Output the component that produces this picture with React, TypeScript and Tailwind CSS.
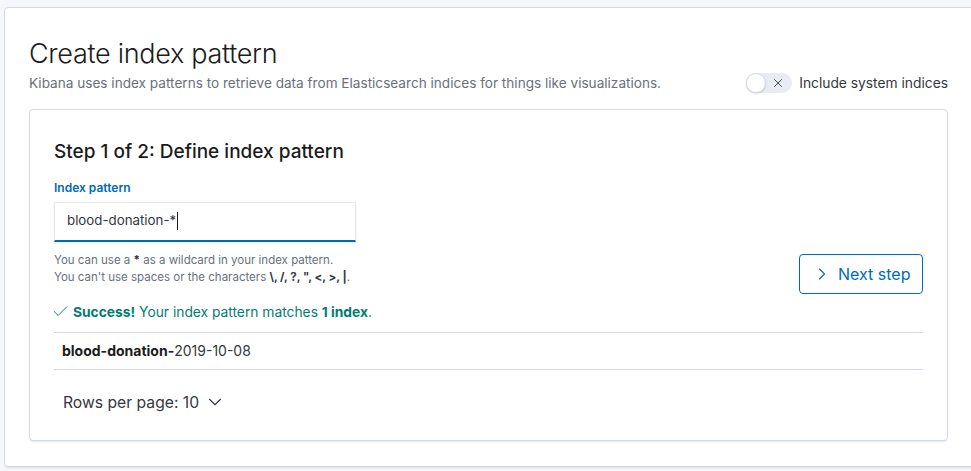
import { ChevronRight, ChevronDown, Check, X } from "lucide-react"

export default function App() {
  return (
    <div
      className="h-[471px] w-[971px] overflow-hidden bg-[#f5f7fa] pl-[4px] pt-[7px]"
      style={{ fontFamily: "Inter, 'Noto Sans', sans-serif" }}
    >
      <div className="h-[460px] w-[980px] rounded-[4px] border border-[#d3dae6] bg-white pl-[24px] pt-[28px] shadow-[0_2px_2px_-1px_rgba(152,162,179,0.3)]">
        {/* Header */}
        <h1 className="text-[27px] font-light leading-[36px] tracking-[-0.3px] text-[#1a1c21]">
          Create index pattern
        </h1>
        <div className="mt-[1px] flex w-[919px] items-center justify-between">
          <p className="text-[13.6px] leading-[20px] text-[#69707d]">
            Kibana uses index patterns to retrieve data from Elasticsearch indices for things like visualizations.
          </p>
          <div className="flex items-center gap-[7px]">
            <div className="relative h-[20px] w-[46px] rounded-full bg-[#e9edf3]">
              <div className="absolute left-0 top-0 h-[20px] w-[20px] rounded-full border border-[#d3dae6] bg-white shadow-[0_1px_2px_rgba(0,0,0,0.15)]" />
              <X className="absolute left-[25px] top-[3px] h-[14px] w-[14px] text-[#343741]" strokeWidth={1.5} />
            </div>
            <span className="text-[13.8px] text-[#343741]">Include system indices</span>
          </div>
        </div>

        {/* Step panel */}
        <div className="mt-[15px] h-[332px] w-[919px] rounded-[4px] border border-[#d3dae6] bg-white px-[24px] pt-[30px] shadow-[0_2px_2px_-1px_rgba(152,162,179,0.3)]">
          <h2 className="text-[19px] font-medium leading-[24px] text-[#1a1c21]">
            Step 1 of 2: Define index pattern
          </h2>
          <div className="mt-[16px] flex items-start justify-between">
            <div>
              <label className="block text-[12px] font-semibold leading-[16px] text-[#006bb4]">
                Index pattern
              </label>
              <div className="mt-[6px] flex h-[40px] w-[302px] items-center border border-[#e4e8ef] border-b-2 border-b-[#006bb4] bg-white pl-[12px] shadow-[0_1px_2px_rgba(0,0,0,0.08)]">
                <span className="text-[13.3px] text-[#343741]">blood-donation-*</span>
                <span className="ml-[1px] h-[18px] w-[1px] bg-[#1a1c21]" />
              </div>
              <div className="mt-[10px] text-[11.5px] leading-[17px] text-[#69707d]">
                <p>
                  You can use a <b className="text-[#343741]">*</b> as a wildcard in your index pattern.
                </p>
                <p>
                  You can't use spaces or the characters{" "}
                  <b className="text-[#343741]">\, /, ?, ", &lt;, &gt;, |</b>.
                </p>
              </div>
            </div>
            <button className="mb-[-8px] mt-[74px] flex h-[40px] w-[124px] items-center gap-[6px] rounded-[4px] border border-[#006bb4] pl-[12px] text-[16px] text-[#006bb4]">
              <ChevronRight className="h-[20px] w-[20px]" strokeWidth={1.3} />
              Next step
            </button>
          </div>

          <div className="mt-[16px] flex items-center gap-[3px] pb-[10px] text-[13.8px] leading-[20px] text-[#017d73]">
            <Check className="-ml-[3px] h-[19px] w-[19px]" strokeWidth={1.2} />
            <span>
              <b>Success!</b> Your index pattern matches <b>1 index</b>.
            </span>
          </div>
          <div className="border-y border-[#d3dae6] px-[8px] py-[9px] text-[14px] leading-[18px] text-[#343741]">
            <b className="text-[#1a1c21]">blood-donation-</b>2019-10-08
          </div>
          <div className="mt-[21px] flex items-center gap-[5px] pl-[9px] text-[15.7px] text-[#343741]">
            Rows per page: 10
            <ChevronDown className="h-[22px] w-[22px]" strokeWidth={1.2} />
          </div>
        </div>
      </div>
    </div>
  )
}
